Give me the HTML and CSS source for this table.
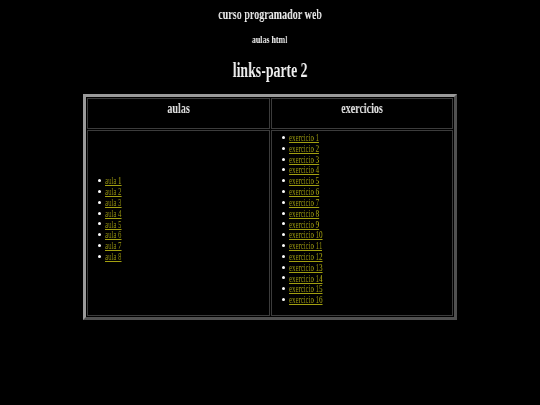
FILE: index.html
```html
<!DOCTYPE html>
<html lang="pt">
<head>
<meta charset="utf-8">
<title>links-parte 2</title>
<link rel="stylesheet" href="styles.css">
</head>
<body>
<header class="page-head">
  <div class="t1"><span class="sx">curso programador web</span></div>
  <div class="t2"><span class="sx">aulas html</span></div>
  <h1 class="t3"><span class="sx">links-parte 2</span></h1>
</header>
<table class="links">
  <thead>
    <tr>
      <th><span class="sx">aulas</span></th>
      <th><span class="sx">exercicios</span></th>
    </tr>
  </thead>
  <tbody>
    <tr>
      <td>
        <ul>
          <li><a href="#">aula 1</a></li>
          <li><a href="#">aula 2</a></li>
          <li><a href="#">aula 3</a></li>
          <li><a href="#">aula 4</a></li>
          <li><a href="#">aula 5</a></li>
          <li><a href="#">aula 6</a></li>
          <li><a href="#">aula 7</a></li>
          <li><a href="#">aula 8</a></li>
        </ul>
      </td>
      <td>
        <ul>
          <li><a href="#">exercicio 1</a></li>
          <li><a href="#">exercicio 2</a></li>
          <li><a href="#">exercicio 3</a></li>
          <li><a href="#">exercicio 4</a></li>
          <li><a href="#">exercicio 5</a></li>
          <li><a href="#">exercicio 6</a></li>
          <li><a href="#">exercicio 7</a></li>
          <li><a href="#">exercicio 8</a></li>
          <li><a href="#">exercicio 9</a></li>
          <li><a href="#">exercicio 10</a></li>
          <li><a href="#">exercicio 11</a></li>
          <li><a href="#">exercicio 12</a></li>
          <li><a href="#">exercicio 13</a></li>
          <li><a href="#">exercicio 14</a></li>
          <li><a href="#">exercicio 15</a></li>
          <li><a href="#">exercicio 16</a></li>
        </ul>
      </td>
    </tr>
  </tbody>
</table>
</body>
</html>
```

FILE: styles.css
```css
html, body {
  margin: 0;
  padding: 0;
  background: #000;
}

body {
  font-family: "Liberation Serif", "Times New Roman", serif;
  color: #f0f0f0;
}

.sx {
  display: inline-block;
  transform: scaleX(0.72);
  transform-origin: center;
  will-change: transform;
}

.page-head {
  text-align: center;
  font-weight: bold;
}

.t1 {
  margin-top: 6px;
  font-size: 14px;
  line-height: 17px;
}

.t2 {
  margin-top: 10px;
  font-size: 11px;
  line-height: 13px;
}

.t3 {
  margin: 13px 0 0;
  font-size: 20px;
  line-height: 22px;
}

.t3 .sx {
  transform: scaleX(0.69);
}

.links {
  margin: 13px auto 0;
  width: 374px;
  border-collapse: separate;
  border-spacing: 1px;
  border: 3px solid;
  border-color: #9a9a9a #505050 #505050 #9a9a9a;
}

.links th,
.links td {
  width: 50%;
  padding: 0;
  border: 1px solid #3c3c3c;
}

.links th {
  height: 28px;
  padding-top: 1px;
  font-size: 14px;
  line-height: 17px;
  font-weight: bold;
  color: #e4e4e4;
  text-align: center;
  vertical-align: top;
}

.links td {
  vertical-align: middle;
  text-align: left;
}

.links ul {
  margin: 1px 0 10px;
  padding-left: 10px;
  list-style: none;
  font-size: 11px;
  line-height: 10.82px;
}

.links li {
  display: flex;
  align-items: center;
  height: 10.82px;
}

.links li::before {
  content: "";
  flex: none;
  width: 3px;
  height: 3px;
  margin-right: 4px;
  border-radius: 50%;
  background: #fff;
}

.links a {
  display: inline-block;
  color: #a3a010;
  text-decoration: underline;
  transform: scaleX(0.62);
  transform-origin: left center;
  will-change: transform;
}
```
